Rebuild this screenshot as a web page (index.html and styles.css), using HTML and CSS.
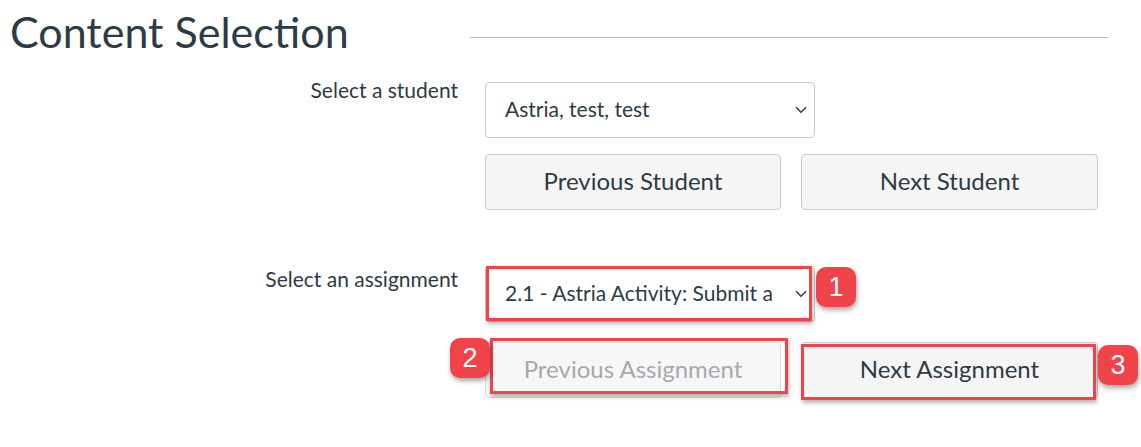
FILE: index.html
```html
<!DOCTYPE html>
<html lang="en">
<head>
<meta charset="utf-8">
<title>Content Selection</title>
<link rel="stylesheet" href="styles.css">
</head>
<body>
<div class="page">
  <header class="header">
    <h1 class="title">Content Selection</h1>
    <div class="rule"></div>
  </header>

  <div class="form">
    <div class="label label-student">Select a student</div>
    <div class="controls">
      <div class="select-wrap">
        <div class="select">Astria, test, test</div>
        <svg class="chevron" width="12" height="8" viewBox="0 0 12 8"><path d="M1 1.2 L6 6.2 L11 1.2" fill="none" stroke="#2d3b45" stroke-width="1.5"/></svg>
      </div>
      <div class="btn-row">
        <button class="btn">Previous Student</button>
        <button class="btn">Next Student</button>
      </div>
    </div>

    <div class="label label-assign">Select an assignment</div>
    <div class="controls controls-assign">
      <div class="select-wrap">
        <div class="select">2.1 - Astria Activity: Submit a</div>
        <svg class="chevron" width="12" height="8" viewBox="0 0 12 8"><path d="M1 1.2 L6 6.2 L11 1.2" fill="none" stroke="#2d3b45" stroke-width="1.5"/></svg>
        <div class="mark mark-select"></div>
        <div class="badge badge-1">1</div>
      </div>
      <div class="btn-row btn-row-assign">
        <div class="btn-wrap">
          <button class="btn btn-disabled" disabled>Previous Assignment</button>
          <div class="mark mark-prev"></div>
          <div class="badge badge-2">2</div>
        </div>
        <div class="btn-wrap">
          <button class="btn">Next Assignment</button>
          <div class="mark mark-next"></div>
          <div class="badge badge-3">3</div>
        </div>
      </div>
    </div>
  </div>
</div>
</body>
</html>
```

FILE: styles.css
```css
* { box-sizing: border-box; }
html, body { margin: 0; padding: 0; background: #ffffff; }
body {
  font-family: Lato, "Noto Sans", "Liberation Sans", sans-serif;
  color: #2d3b45;
}
.page { width: 1141px; height: 447px; overflow: hidden; }

.header {
  display: flex;
  align-items: flex-start;
  padding: 7px 33px 0 10px;
}
.title {
  margin: 0;
  font-size: 43px;
  font-weight: 400;
  line-height: 50px;
  white-space: nowrap;
}
.rule {
  flex: 1;
  margin-left: 121px;
  margin-top: 30px;
  border-top: 1px solid #b8bcbf;
}

.form {
  display: grid;
  grid-template-columns: 458px 613px;
  column-gap: 27px;
  margin-top: 25px;
}
.label {
  text-align: right;
  font-size: 21px;
  line-height: 24px;
  margin-top: -4px;
  white-space: nowrap;
}
.label-assign { margin-top: 57px; }

.controls { display: flex; flex-direction: column; gap: 16px; }
.controls-assign { margin-top: 56px; gap: 20px; }

.select-wrap { position: relative; width: 330px; height: 56px; }
.select {
  height: 56px;
  border: 1px solid #c7cdd1;
  border-radius: 4px;
  background: #fff;
  font-size: 21px;
  line-height: 52px;
  padding-left: 19px;
  white-space: nowrap;
}
.chevron { position: absolute; left: 310px; top: 24px; }

.btn-row { display: flex; gap: 20px; }
.btn-wrap { position: relative; }
.btn {
  width: 296px;
  height: 56px;
  border: 1px solid #c7cdd1;
  border-radius: 4px;
  background: #f5f5f5;
  color: #2d3b45;
  font-family: Lato, "Noto Sans", "Liberation Sans", sans-serif;
  font-size: 24px;
  padding: 0 0 4px;
}
.btn-row .btn-wrap:last-child .btn, .btn-row > .btn:last-child { width: 297px; }
.btn-disabled { color: #a5aaae; background: #f7f7f7; border-color: #dcdfe1; }

.mark {
  position: absolute;
  border: 3px solid #f0434a;
  box-shadow: 1px 3px 4px rgba(0,0,0,0.28);
}
.mark-select { left: 1px; top: 0; width: 326px; height: 55px; }
.mark-prev { left: 5px; top: -4px; width: 298px; height: 56px; }
.mark-next { left: 0; top: 2px; width: 295px; height: 56px; }

.badge {
  position: absolute;
  width: 40px;
  height: 40px;
  border-radius: 10px;
  background: #f0434a;
  color: #ffffff;
  font-family: "Liberation Sans", Arial, sans-serif;
  font-size: 27px;
  line-height: 40px;
  text-align: center;
  box-shadow: 1px 3px 5px rgba(0,0,0,0.35);
}
.badge-1 { left: 331px; top: 1px; }
.badge-2 { left: -35px; top: -4px; }
.badge-3 { left: 297px; top: 3px; }
```
